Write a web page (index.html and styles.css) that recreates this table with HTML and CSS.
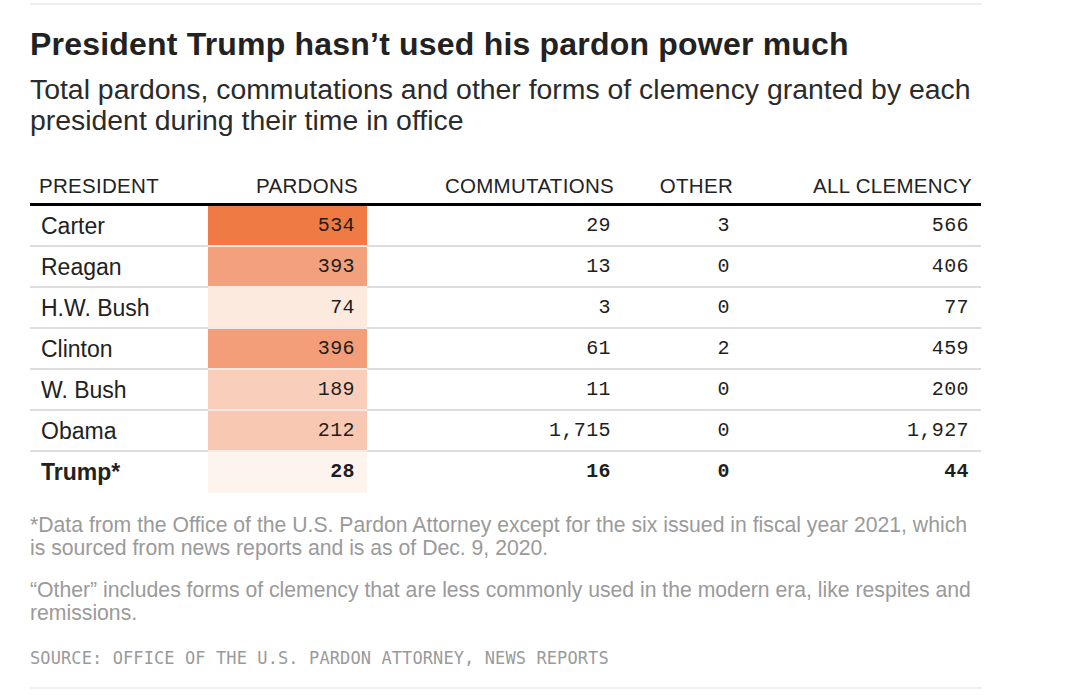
FILE: index.html
```html
<!DOCTYPE html>
<html lang="en">
<head>
<meta charset="utf-8">
<title>President Trump hasn’t used his pardon power much</title>
<link rel="stylesheet" href="styles.css">
</head>
<body>
<div class="chart">
  <div class="rule"></div>
  <h1 class="title">President Trump hasn’t used his pardon power much</h1>
  <p class="dek">Total pardons, commutations and other forms of clemency granted by each president during their time in office</p>
  <table class="data">
    <thead>
      <tr>
        <th class="c-name">PRESIDENT</th>
        <th class="c-pardon">PARDONS</th>
        <th class="c-comm">COMMUTATIONS</th>
        <th class="c-other">OTHER</th>
        <th class="c-all">ALL CLEMENCY</th>
      </tr>
    </thead>
    <tbody>
      <tr>
        <td class="c-name">Carter</td>
        <td class="c-pardon num shade-1">534</td>
        <td class="c-comm num">29</td>
        <td class="c-other num">3</td>
        <td class="c-all num">566</td>
      </tr>
      <tr>
        <td class="c-name">Reagan</td>
        <td class="c-pardon num shade-2">393</td>
        <td class="c-comm num">13</td>
        <td class="c-other num">0</td>
        <td class="c-all num">406</td>
      </tr>
      <tr>
        <td class="c-name">H.W. Bush</td>
        <td class="c-pardon num shade-5">74</td>
        <td class="c-comm num">3</td>
        <td class="c-other num">0</td>
        <td class="c-all num">77</td>
      </tr>
      <tr>
        <td class="c-name">Clinton</td>
        <td class="c-pardon num shade-2b">396</td>
        <td class="c-comm num">61</td>
        <td class="c-other num">2</td>
        <td class="c-all num">459</td>
      </tr>
      <tr>
        <td class="c-name">W. Bush</td>
        <td class="c-pardon num shade-4">189</td>
        <td class="c-comm num">11</td>
        <td class="c-other num">0</td>
        <td class="c-all num">200</td>
      </tr>
      <tr>
        <td class="c-name">Obama</td>
        <td class="c-pardon num shade-3">212</td>
        <td class="c-comm num">1,715</td>
        <td class="c-other num">0</td>
        <td class="c-all num">1,927</td>
      </tr>
      <tr class="highlight">
        <td class="c-name">Trump*</td>
        <td class="c-pardon num shade-6">28</td>
        <td class="c-comm num">16</td>
        <td class="c-other num">0</td>
        <td class="c-all num">44</td>
      </tr>
    </tbody>
  </table>
  <p class="note">*Data from the Office of the U.S. Pardon Attorney except for the six issued in fiscal year 2021, which is sourced from news reports and is as of Dec. 9, 2020.</p>
  <p class="note note-2">“Other” includes forms of clemency that are less commonly used in the modern era, like respites and remissions.</p>
  <p class="source">SOURCE: OFFICE OF THE U.S. PARDON ATTORNEY, NEWS REPORTS</p>
  <div class="rule rule-bottom"></div>
</div>
</body>
</html>
```
FILE: styles.css
```css
html, body {
  margin: 0;
  padding: 0;
  background: #ffffff;
}

body {
  font-family: "Liberation Sans", Arial, sans-serif;
  color: #222222;
}

.chart {
  width: 952px;
  margin-left: 30px;
  display: flex;
  flex-direction: column;
}

.rule {
  height: 2px;
  background: #efefef;
  margin-top: 3px;
}

.title {
  margin: 20px 0 0;
  font-size: 32px;
  line-height: 38px;
  font-weight: 700;
  letter-spacing: 0.2px;
  color: #222222;
}

.dek {
  margin: 11px 0 0;
  font-size: 28.4px;
  line-height: 31px;
  font-weight: 400;
  color: #2b2b2b;
}

.data {
  margin-top: 38px;
  width: 951px;
  border-collapse: collapse;
  table-layout: fixed;
}

.data th,
.data td {
  box-sizing: border-box;
}

.data th {
  font-size: 20.5px;
  line-height: 24px;
  font-weight: 400;
  letter-spacing: 0.3px;
  color: #222222;
  padding: 0 9px 5px;
  text-align: right;
  border-bottom: 3px solid #000000;
  white-space: nowrap;
}

.data th.c-name {
  text-align: left;
  padding-left: 9px;
}

.c-name { width: 178px; }
.c-pardon { width: 159px; }
.c-comm { width: 256px; }
.c-other { width: 119px; }
.c-all { width: 239px; }

.data td {
  font-size: 23px;
  line-height: 26px;
  padding: 7px 12px 6px;
  text-align: right;
  border-bottom: 2px solid #dddddd;
  white-space: nowrap;
  color: #222222;
}

.data td.c-name {
  text-align: left;
  padding-left: 11px;
}

.data td.num {
  font-family: "Liberation Mono", "DejaVu Sans Mono", monospace;
  font-size: 20px;
  letter-spacing: 0.4px;
  color: #1e1e1e;
}

.data td.c-pardon {
  border-bottom-color: #f4e9e3;
}

.shade-1 { background: #ef7a43; }
.shade-2 { background: #f3a17c; }
.shade-2b { background: #f39e78; }
.shade-3 { background: #f8c8b2; }
.shade-4 { background: #f9cfbc; }
.shade-5 { background: #fdeadf; }
.shade-6 { background: #fef4ee; }

.data tr.highlight td {
  font-weight: 700;
  border-bottom: 0;
  padding-bottom: 8px;
}

.note {
  margin: 20px 0 0;
  font-size: 21.2px;
  line-height: 23px;
  color: #9a9a9a;
}

.note-2 {
  margin-top: 19px;
}

.source {
  margin: 24px 0 0;
  font-family: "DejaVu Sans Mono", monospace;
  font-size: 17px;
  line-height: 20px;
  letter-spacing: 0.1px;
  color: #9a9a9a;
}

.rule-bottom {
  margin-top: 19px;
}
```
